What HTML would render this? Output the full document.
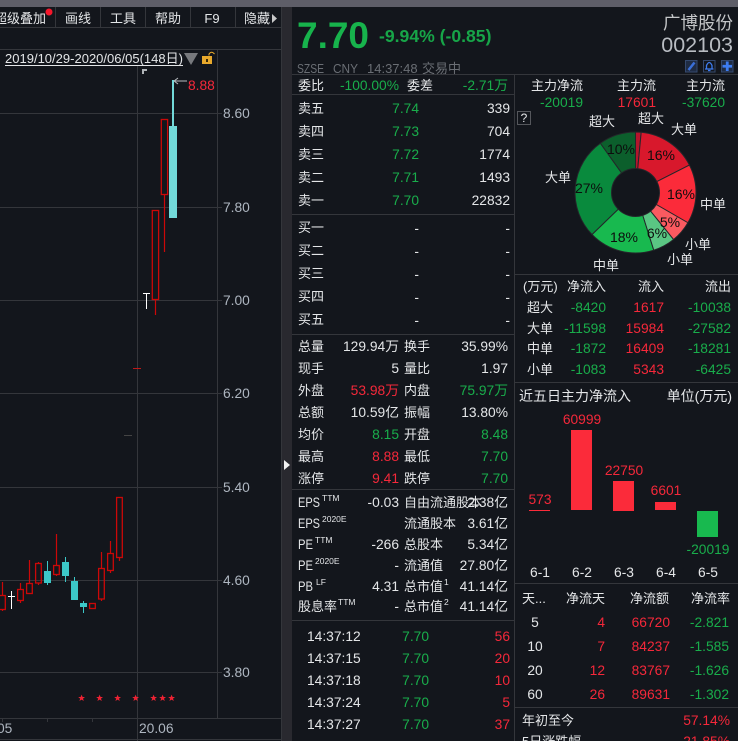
<!DOCTYPE html>
<html lang="zh"><head><meta charset="utf-8"><title>广博股份</title>
<style>
html,body{margin:0;padding:0;background:#13161c;width:738px;height:741px;overflow:hidden}
svg{display:block;font-family:"Liberation Sans","Noto Sans CJK SC",sans-serif;font-size:13px}
text{fill:#e4e6e8}
.g{fill:#19ad4b}.r{fill:#f5283a}
.e{text-anchor:end;font-size:13.8px}.m{text-anchor:middle;font-size:13.8px}.n{font-size:13.8px}
.c{font-size:13px}
.k{fill:#0d0d0d;font-size:14px;text-anchor:middle}
.d{fill:#aeb6c0;font-size:13.8px}
.l{stroke:#34363b;stroke-width:1;fill:none}
.rc{stroke:#cc0808;stroke-width:1.3;fill:none}
.rw{stroke:#cc0808;stroke-width:1.2}
.cy{fill:#3cc8c8}
.cw{stroke:#3cc8c8;stroke-width:1}
.s{font-size:8.5px}
</style></head><body>
<svg width="738" height="741" viewBox="0 0 738 741" xmlns="http://www.w3.org/2000/svg">
<rect width="738" height="741" fill="#13161c"/>
<rect width="738" height="7" fill="#5e5e68"/>
<rect x="281" y="7" width="11" height="734" fill="#29292f"/>
<path class="l" d="M281.500 7V741"/>

<!-- toolbar -->
<path class="l" d="M0 27.500H281M55.500 7V27M100.500 7V27M145.500 7V27M190.500 7V27M235.500 7V27M0 49.500H281"/>
<text x="-6" y="23">超级叠加</text>
<circle cx="49" cy="12" r="3.500" fill="#f5162b"/>
<text x="78" y="23" class="m c">画线</text>
<text x="123" y="23" class="m c">工具</text>
<text x="168" y="23" class="m c">帮助</text>
<text x="212" y="23" class="m c">F9</text>
<text x="244" y="23">隐藏</text>
<path d="M272 14V23L277 18.500Z" fill="#c8c8c8"/>

<!-- chart grid -->
<path class="l" d="M0 113.500H222M0 207.500H222M0 300.500H222M0 393.500H222M0 487.500H222M0 580.500H222M0 672.500H222"/>
<path class="l" d="M217.500 49V718M137.500 66V741M0 718.500H281M0 739.500H281M2.500 718V722M47.500 718V722M92.500 718V722"/>
<text x="5" y="63" textLength="178" lengthAdjust="spacingAndGlyphs">2019/10/29-2020/06/05(148日)</text>
<path d="M5 65.500H183" stroke="#e4e6e8" stroke-width="1"/>
<path d="M184 53H198L191 65Z" fill="#77797d"/>
<rect x="202" y="56" width="10" height="8" fill="#e8a92c"/>
<rect x="206" y="59" width="2" height="3" fill="#3a2a08"/>
<path d="M209 55.500V54Q211.500 50.500 214.500 54" fill="none" stroke="#e8a92c" stroke-width="1"/>
<text x="223" y="118" class="d">8.60</text>
<text x="223" y="212" class="d">7.80</text>
<text x="223" y="305" class="d">7.00</text>
<text x="223" y="398" class="d">6.20</text>
<text x="223" y="492" class="d">5.40</text>
<text x="223" y="585" class="d">4.60</text>
<text x="223" y="677" class="d">3.80</text>
<text x="-3" y="733" class="d">05</text>
<text x="139" y="733" class="d">20.06</text>

<!-- upper candles -->
<path d="M142 69H147V71H144V74H142Z" fill="#b0b4b8"/>
<rect x="172" y="80" width="2" height="46" fill="#72d9d9"/>
<rect x="169" y="126" width="8" height="92" fill="#72d9d9"/>
<path d="M174 81H187M174 81L178 78M174 81L178 84" stroke="#b8bcc0" stroke-width="1" fill="none"/>
<text x="188" y="90" class="r n">8.88</text>
<rect class="rc" x="161.300" y="119.500" width="6.300" height="75"/>
<path class="rw" d="M164.500 195V252"/>
<rect class="rc" x="152.300" y="210.500" width="6.300" height="89"/>
<path class="rw" d="M155.500 300V315"/>
<path d="M146.500 293V309M143 293.500H150" stroke="#fff" stroke-width="1"/>
<path d="M133 368.500H141" stroke="#c01818" stroke-width="1"/>
<path d="M124 435.500H132" stroke="#444" stroke-width="1"/>

<!-- lower candles -->
<rect class="rc" x="-1" y="595.500" width="6.300" height="14"/><path class="rw" d="M2.500 582V595M2.500 609V611"/>
<path d="M11.500 591V609M8 596.500H15" stroke="#fff" stroke-width="1"/>
<rect class="rc" x="17.600" y="589.500" width="5.700" height="11"/><path class="rw" d="M20.500 583V589M20.500 601V603"/>
<rect class="rc" x="26.600" y="583.500" width="5.700" height="10"/><path class="rw" d="M29.500 560V583"/>
<rect class="rc" x="35.600" y="563.500" width="5.700" height="19.500"/><path class="rw" d="M38.500 562V563M38.500 583V585"/>
<rect class="cy" x="44" y="571" width="7" height="12"/><path class="cw" d="M47.500 561V585"/>
<rect class="rc" x="53.600" y="565.500" width="5.700" height="9"/><path class="rw" d="M56.500 534V565M56.500 575V576"/>
<rect class="cy" x="62" y="562" width="7" height="14"/><path class="cw" d="M65.500 557V582"/>
<rect class="cy" x="71" y="581" width="7" height="19"/><path class="cw" d="M74.500 577V581"/>
<rect class="cy" x="80" y="603" width="7" height="4"/><path class="cw" d="M83.500 601V613"/>
<rect class="rc" x="89.600" y="603.500" width="5.700" height="5"/>
<rect class="rc" x="98.600" y="568.500" width="5.700" height="30.500"/><path class="rw" d="M101.500 552V568M101.500 599V601"/>
<rect class="rc" x="107.600" y="553.500" width="5.700" height="17"/><path class="rw" d="M110.500 541V553M110.500 571V573"/>
<rect class="rc" x="116.600" y="497.500" width="5.700" height="60"/><path class="rw" d="M119.500 558V561"/>
<g fill="#ee2233">
<path d="M81.600 694.600L82.600 697H85L83 698.600L83.800 701L81.600 699.600L79.400 701L80.200 698.600L78.200 697H80.600Z"/>
<path d="M99.600 694.600L100.600 697H103L101 698.600L101.800 701L99.600 699.600L97.400 701L98.200 698.600L96.200 697H98.600Z"/>
<path d="M117.600 694.600L118.600 697H121L119 698.600L119.800 701L117.600 699.600L115.400 701L116.200 698.600L114.200 697H116.600Z"/>
<path d="M135.600 694.600L136.600 697H139L137 698.600L137.800 701L135.600 699.600L133.400 701L134.200 698.600L132.200 697H134.600Z"/>
<path d="M153.600 694.600L154.600 697H157L155 698.600L155.800 701L153.600 699.600L151.400 701L152.200 698.600L150.200 697H152.600Z"/>
<path d="M162.600 694.600L163.600 697H166L164 698.600L164.800 701L162.600 699.600L160.400 701L161.200 698.600L159.200 697H161.600Z"/>
<path d="M171.600 694.600L172.600 697H175L173 698.600L173.800 701L171.600 699.600L169.400 701L170.200 698.600L168.200 697H170.600Z"/>
</g>
<path d="M284 460V470L290 465Z" fill="#f2f2f2"/>

<!-- header -->
<text x="297" y="48" style="font-size:37px;font-weight:bold;fill:#17b34c">7.70</text>
<text x="379" y="42" style="font-size:17.600px;font-weight:bold;fill:#17a548">-9.94% (-0.85)</text>
<text x="733" y="29" style="font-size:17.500px;fill:#c4c6c8;text-anchor:end">广博股份</text>
<text x="733" y="52" style="font-size:21.500px;fill:#b8bcc2;text-anchor:end">002103</text>
<text x="297" y="73" style="fill:#6a6e74" textLength="27" lengthAdjust="spacingAndGlyphs">SZSE</text>
<text x="333" y="73" style="fill:#6a6e74" textLength="25" lengthAdjust="spacingAndGlyphs">CNY</text>
<text x="367" y="73" style="fill:#6a6e74">14:37:48</text>
<text x="422" y="73" style="fill:#6a6e74">交易中</text>
<g fill="none" stroke="#3d7cf0">
<rect x="685.500" y="60.500" width="11.500" height="11.500" fill="#1f2c44" stroke="#34496e"/>
<path d="M688.500 70L694.500 62.500" stroke-width="2.500" stroke="#3a6fd8"/>
<rect x="703.500" y="60.500" width="11.500" height="11.500" fill="#13161c" stroke="#34496e"/>
<path d="M705 69H713.500M706.500 68.500V65.500Q709.250 59.500 712 65.500V68.500M708 70.500H710.500" stroke-width="1.300"/>
<rect x="721.500" y="60.500" width="11.500" height="11.500" fill="#1f2c44" stroke="#34496e"/>
<path d="M722.500 66.250H732M727.250 61.500V71" stroke-width="2.800"/>
</g>

<!-- lines of right panel -->
<path class="l" d="M292 74.500H738M514.500 74V741M292 94.500H514M292 214.500H514M292 334.500H514M292 489.500H514M292 620.500H514M515 274.500H738M515 382.500H738M515 583.500H738M515 707.500H738"/>

<text x="298" y="90">委比</text>
<text x="399" y="90" class="e g">-100.00%</text>
<text x="407" y="90">委差</text>
<text x="508" y="90" class="e g">-2.71万</text>

<text x="298" y="113">卖五</text><text x="419" y="113" class="e g">7.74</text><text x="510" y="113" class="e">339</text>
<text x="298" y="136">卖四</text><text x="419" y="136" class="e g">7.73</text><text x="510" y="136" class="e">704</text>
<text x="298" y="159">卖三</text><text x="419" y="159" class="e g">7.72</text><text x="510" y="159" class="e">1774</text>
<text x="298" y="182">卖二</text><text x="419" y="182" class="e g">7.71</text><text x="510" y="182" class="e">1493</text>
<text x="298" y="205">卖一</text><text x="419" y="205" class="e g">7.70</text><text x="510" y="205" class="e">22832</text>

<text x="298" y="232">买一</text><text x="419" y="233" class="e">-</text><text x="510" y="233" class="e">-</text>
<text x="298" y="255">买二</text><text x="419" y="256" class="e">-</text><text x="510" y="256" class="e">-</text>
<text x="298" y="278">买三</text><text x="419" y="279" class="e">-</text><text x="510" y="279" class="e">-</text>
<text x="298" y="301">买四</text><text x="419" y="302" class="e">-</text><text x="510" y="302" class="e">-</text>
<text x="298" y="324">买五</text><text x="419" y="325" class="e">-</text><text x="510" y="325" class="e">-</text>

<text x="298" y="351">总量</text><text x="399" y="351" class="e">129.94万</text><text x="404" y="351">换手</text><text x="508" y="351" class="e">35.99%</text>
<text x="298" y="373">现手</text><text x="399" y="373" class="e">5</text><text x="404" y="373">量比</text><text x="508" y="373" class="e">1.97</text>
<text x="298" y="395">外盘</text><text x="399" y="395" class="e r">53.98万</text><text x="404" y="395">内盘</text><text x="508" y="395" class="e g">75.97万</text>
<text x="298" y="417">总额</text><text x="399" y="417" class="e">10.59亿</text><text x="404" y="417">振幅</text><text x="508" y="417" class="e">13.80%</text>
<text x="298" y="439">均价</text><text x="399" y="439" class="e g">8.15</text><text x="404" y="439">开盘</text><text x="508" y="439" class="e g">8.48</text>
<text x="298" y="461">最高</text><text x="399" y="461" class="e r">8.88</text><text x="404" y="461">最低</text><text x="508" y="461" class="e g">7.70</text>
<text x="298" y="483">涨停</text><text x="399" y="483" class="e r">9.41</text><text x="404" y="483">跌停</text><text x="508" y="483" class="e g">7.70</text>

<text x="298" y="507" class="n" textLength="22" lengthAdjust="spacingAndGlyphs">EPS</text><text x="322" y="501" class="s">TTM</text><text x="399" y="507" class="e">-0.03</text><text x="404" y="507">自由流通股本</text><text x="508" y="507" class="e">2.38亿</text>
<text x="298" y="528" class="n" textLength="22" lengthAdjust="spacingAndGlyphs">EPS</text><text x="322" y="522" class="s">2020E</text><text x="404" y="528">流通股本</text><text x="508" y="528" class="e">3.61亿</text>
<text x="298" y="549" class="n" textLength="15" lengthAdjust="spacingAndGlyphs">PE</text><text x="315" y="543" class="s">TTM</text><text x="399" y="549" class="e">-266</text><text x="404" y="549">总股本</text><text x="508" y="549" class="e">5.34亿</text>
<text x="298" y="570" class="n" textLength="15" lengthAdjust="spacingAndGlyphs">PE</text><text x="315" y="564" class="s">2020E</text><text x="399" y="570" class="e">-</text><text x="404" y="570">流通值</text><text x="508" y="570" class="e">27.80亿</text>
<text x="298" y="591" class="n" textLength="15" lengthAdjust="spacingAndGlyphs">PB</text><text x="316" y="585" class="s">LF</text><text x="399" y="591" class="e">4.31</text><text x="404" y="591">总市值</text><text x="444" y="585" class="s">1</text><text x="508" y="591" class="e">41.14亿</text>
<text x="298" y="611">股息率</text><text x="338" y="605" class="s">TTM</text><text x="399" y="611" class="e">-</text><text x="404" y="611">总市值</text><text x="444" y="605" class="s">2</text><text x="508" y="611" class="e">41.14亿</text>

<text x="307" y="641" class="n">14:37:12</text><text x="429" y="641" class="e g">7.70</text><text x="510" y="641" class="e r">56</text>
<text x="307" y="663" class="n">14:37:15</text><text x="429" y="663" class="e g">7.70</text><text x="510" y="663" class="e r">20</text>
<text x="307" y="685" class="n">14:37:18</text><text x="429" y="685" class="e g">7.70</text><text x="510" y="685" class="e r">10</text>
<text x="307" y="707" class="n">14:37:24</text><text x="429" y="707" class="e g">7.70</text><text x="510" y="707" class="e r">5</text>
<text x="307" y="729" class="n">14:37:27</text><text x="429" y="729" class="e g">7.70</text><text x="510" y="729" class="e r">37</text>

<!-- right top -->
<text x="531" y="90">主力净流</text><text x="617" y="90">主力流</text><text x="686" y="90">主力流</text>
<text x="583" y="107" class="e g">-20019</text><text x="656" y="107" class="e r">17601</text><text x="725" y="107" class="e g">-37620</text>
<rect x="517.500" y="111.500" width="13" height="13" fill="none" stroke="#55575c"/>
<text x="524" y="122" style="font-size:12px;text-anchor:middle">?</text>

<!-- donut -->
<g stroke="#24262a" stroke-width="1">
<path fill="#b4152c" d="M635.500 132A60.500 60.500 0 0 1 641.190 132.270L637.760 168.610A24 24 0 0 0 635.500 168.500Z"/>
<path fill="#d8182c" d="M641.190 132.270A60.500 60.500 0 0 1 689.410 165.030L656.890 181.600A24 24 0 0 0 637.760 168.610Z"/>
<path fill="#fb2b3a" d="M689.410 165.030A60.500 60.500 0 0 1 687.890 222.750L656.280 204.500A24 24 0 0 0 656.890 181.600Z"/>
<path fill="#fa5a60" d="M687.890 222.750A60.500 60.500 0 0 1 673.570 239.520L650.600 211.150A24 24 0 0 0 656.280 204.500Z"/>
<path fill="#5ac683" d="M673.570 239.520A60.500 60.500 0 0 1 653.680 250.200L642.710 215.390A24 24 0 0 0 650.600 211.150Z"/>
<path fill="#18b94f" d="M653.680 250.200A60.500 60.500 0 0 1 592.020 234.530L618.250 209.170A24 24 0 0 0 642.710 215.390Z"/>
<path fill="#098a3d" d="M592.020 234.530A60.500 60.500 0 0 1 600.380 143.230L621.570 172.950A24 24 0 0 0 618.250 209.170Z"/>
<path fill="#0c5f2c" d="M600.380 143.230A60.500 60.500 0 0 1 635.500 132L635.500 168.500A24 24 0 0 0 621.570 172.950Z"/>
</g>
<text x="621" y="154" class="k">10%</text>
<text x="661" y="160" class="k">16%</text>
<text x="681" y="199" class="k">16%</text>
<text x="670" y="227" class="k">5%</text>
<text x="657" y="238" class="k">6%</text>
<text x="624" y="242" class="k">18%</text>
<text x="589" y="193" class="k">27%</text>
<text x="602" y="126" class="m c">超大</text>
<text x="651" y="123" class="m c">超大</text>
<text x="684" y="134" class="m c">大单</text>
<text x="713" y="209" class="m c">中单</text>
<text x="698" y="249" class="m c">小单</text>
<text x="680" y="264" class="m c">小单</text>
<text x="606" y="270" class="m c">中单</text>
<text x="558" y="182" class="m c">大单</text>

<!-- flow table -->
<text x="523" y="291">(万元)</text><text x="606" y="291" class="e c">净流入</text><text x="664" y="291" class="e c">流入</text><text x="731" y="291" class="e c">流出</text>
<text x="527" y="312">超大</text><text x="606" y="312" class="e g">-8420</text><text x="664" y="312" class="e r">1617</text><text x="731" y="312" class="e g">-10038</text>
<text x="527" y="333">大单</text><text x="606" y="333" class="e g">-11598</text><text x="664" y="333" class="e r">15984</text><text x="731" y="333" class="e g">-27582</text>
<text x="527" y="353">中单</text><text x="606" y="353" class="e g">-1872</text><text x="664" y="353" class="e r">16409</text><text x="731" y="353" class="e g">-18281</text>
<text x="527" y="374">小单</text><text x="606" y="374" class="e g">-1083</text><text x="664" y="374" class="e r">5343</text><text x="731" y="374" class="e g">-6425</text>

<!-- five days -->
<text x="519" y="401" style="font-size:14px">近五日主力净流入</text><text x="732" y="401" style="font-size:14px;text-anchor:end">单位(万元)</text>
<rect x="529" y="510" width="21" height="1" fill="#fb2b3a"/>
<rect x="571" y="430" width="21" height="80" fill="#fb2b3a"/>
<rect x="613" y="481" width="21" height="30" fill="#fb2b3a"/>
<rect x="655" y="502" width="21" height="8" fill="#fb2b3a"/>
<rect x="697" y="511" width="21" height="26" fill="#18b94f"/>
<text x="540" y="504" class="m r">573</text>
<text x="582" y="424" class="m r">60999</text>
<text x="624" y="475" class="m r">22750</text>
<text x="666" y="495" class="m r">6601</text>
<text x="708" y="554" class="m g">-20019</text>
<text x="540" y="577" class="m">6-1</text><text x="582" y="577" class="m">6-2</text><text x="624" y="577" class="m">6-3</text><text x="666" y="577" class="m">6-4</text><text x="708" y="577" class="m">6-5</text>

<!-- days table -->
<text x="522" y="603">天...</text><text x="605" y="603" class="e c">净流天</text><text x="669" y="603" class="e c">净流额</text><text x="730" y="603" class="e c">净流率</text>
<text x="535" y="627" class="m">5</text><text x="605" y="627" class="e r">4</text><text x="670" y="627" class="e r">66720</text><text x="729" y="627" class="e g">-2.821</text>
<text x="535" y="651" class="m">10</text><text x="605" y="651" class="e r">7</text><text x="670" y="651" class="e r">84237</text><text x="729" y="651" class="e g">-1.585</text>
<text x="535" y="675" class="m">20</text><text x="605" y="675" class="e r">12</text><text x="670" y="675" class="e r">83767</text><text x="729" y="675" class="e g">-1.626</text>
<text x="535" y="699" class="m">60</text><text x="605" y="699" class="e r">26</text><text x="670" y="699" class="e r">89631</text><text x="729" y="699" class="e g">-1.302</text>
<text x="522" y="725">年初至今</text><text x="730" y="725" class="e r">57.14%</text>
<text x="522" y="746">5日涨跌幅</text><text x="730" y="746" class="e r">-21.85%</text>
</svg>
</body></html>
